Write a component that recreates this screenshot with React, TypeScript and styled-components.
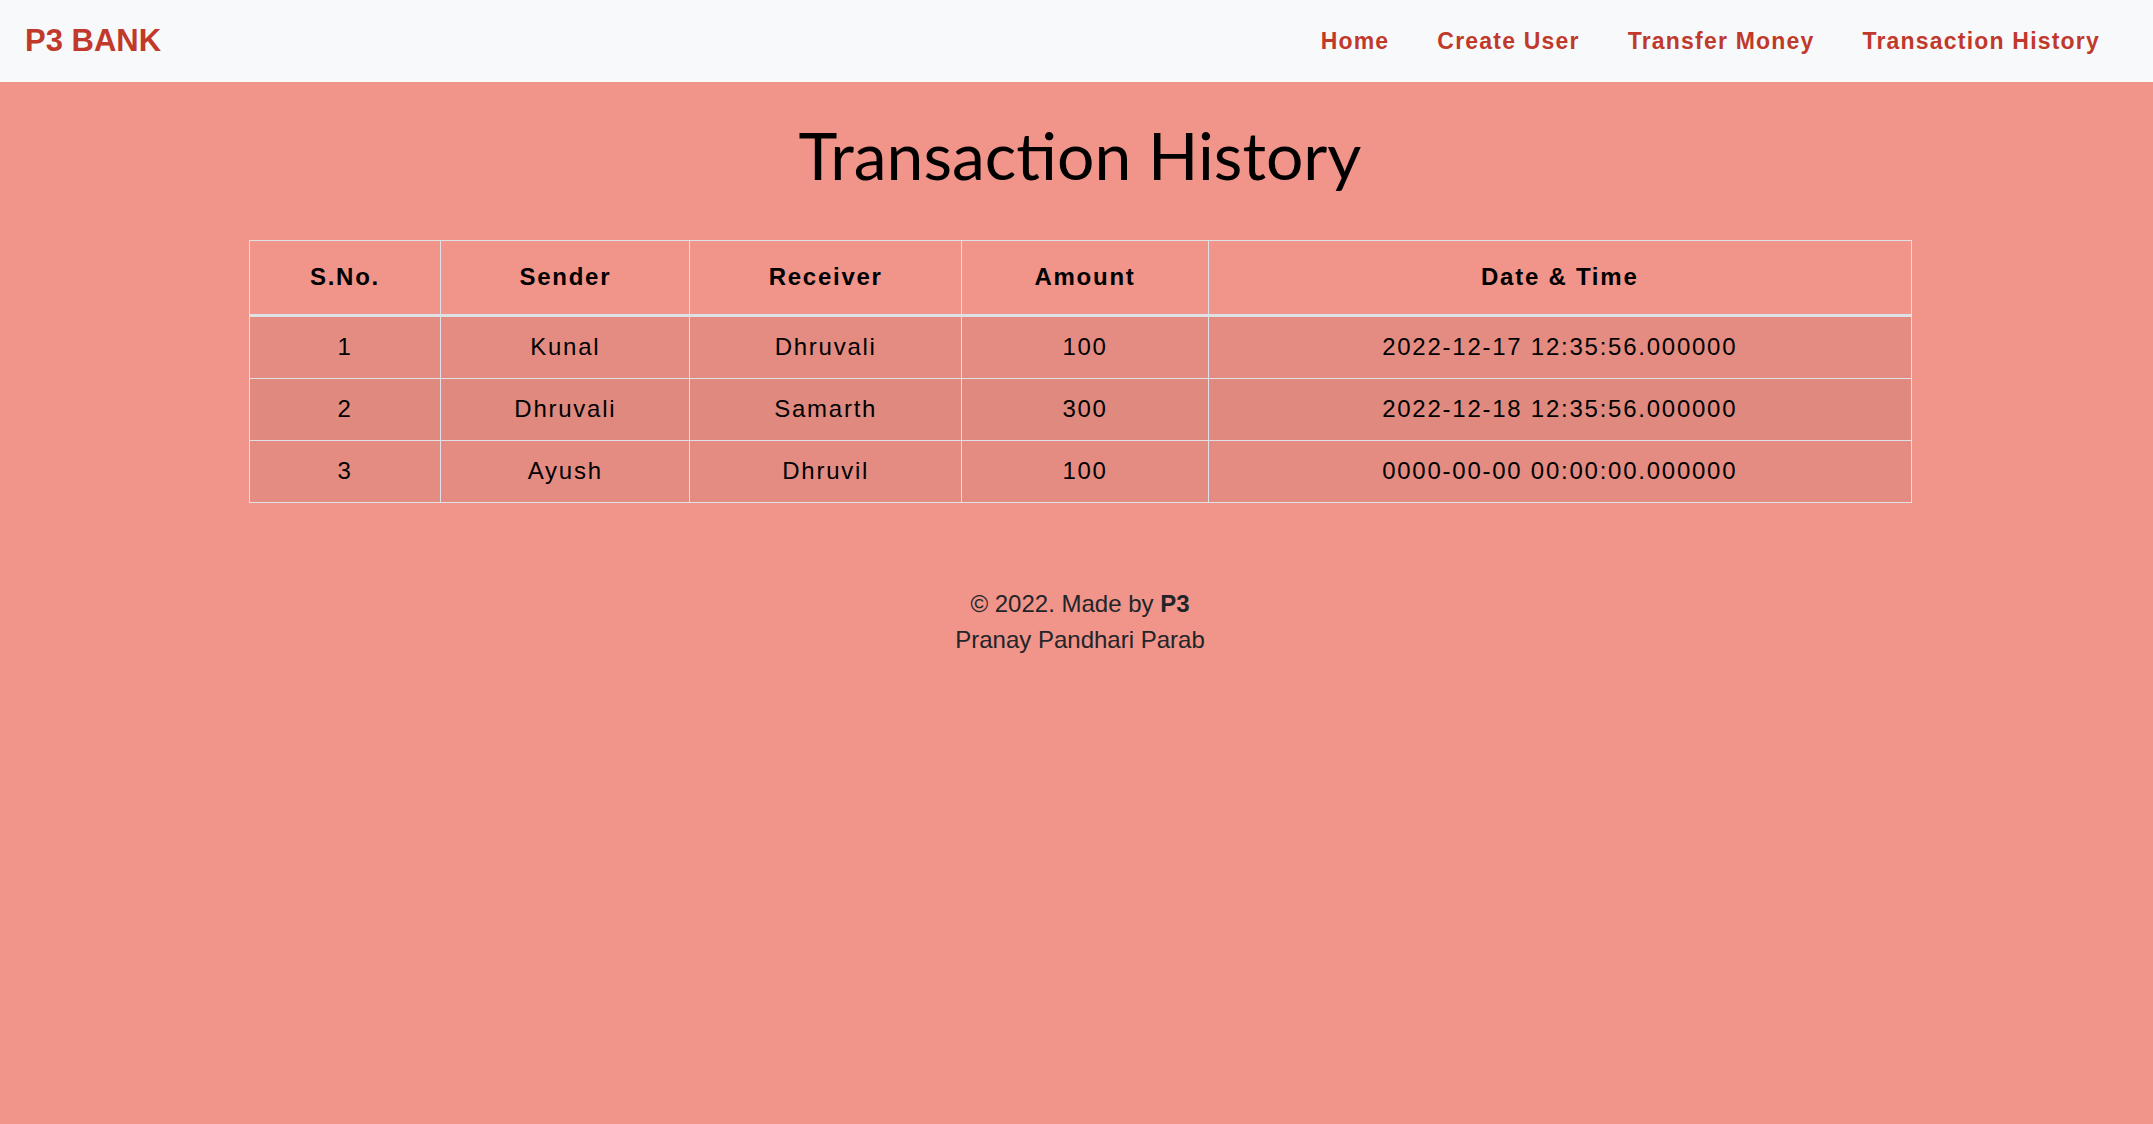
import styled, { createGlobalStyle } from "styled-components";

const GlobalStyle = createGlobalStyle`
    html, body {
        margin: 0;
        padding: 0;
        min-height: 100%;
        background: #f1948a;
    }
    body {
        font-family: "Liberation Sans", Arial, sans-serif;
        color: #212529;
    }
`

const Page = styled.div`
    min-height: 100vh;
    background: #f1948a;
`

const NavBar = styled.nav`
    height: 82px;
    background: #f8f9fa;
    display: flex;
    align-items: center;
    justify-content: space-between;
    padding: 0 29px 0 25px;
`

const Brand = styled.a`
    color: #c0392b;
    font-size: 31px;
    font-weight: bold;
    text-decoration: none;
`

const NavList = styled.ul`
    display: flex;
    list-style: none;
    margin: 0;
    padding: 0;
`

const NavLink = styled.a`
    display: block;
    padding: 0 24px;
    color: #c0392b;
    font-size: 23px;
    font-weight: bold;
    letter-spacing: 1.2px;
    text-decoration: none;
`

const Main = styled.main`
    padding-left: 7px;
`

const Title = styled.h1`
    margin: 33px 0 46px;
    font-family: Lato, "Open Sans", sans-serif;
    font-weight: 400;
    font-size: 66px;
    line-height: 1.2;
    color: #000;
    text-align: center;
`

const Table = styled.table`
    width: 1663px;
    margin: 0 auto;
    border-collapse: collapse;
    font-size: 24px;
    letter-spacing: 1.75px;
    color: #000;
    text-align: center;
    border: 1px solid #dee2e6;
`

const HeadCell = styled.th`
    padding: 18px 8px 18.5px;
    line-height: 36px;
    font-weight: bold;
    border: 1px solid #dee2e6;
    border-bottom: 3px solid #dee2e6;
`

const Row = styled.tr<{ shade: number }>`
    background: rgba(0, 0, 0, ${(props) => props.shade});
`

const Cell = styled.td`
    padding: 12.5px 8px;
    line-height: 36px;
    border: 1px solid #dee2e6;
`

const Footer = styled.footer`
    margin-top: 83px;
    text-align: center;
    font-size: 24px;
    line-height: 36px;
    color: #212529;
`

const columns = [
    { label: "S.No.", width: 192 },
    { label: "Sender", width: 249 },
    { label: "Receiver", width: 272 },
    { label: "Amount", width: 247 },
    { label: "Date & Time", width: 703 },
]

const transactions = [
    { id: 1, sender: "Kunal", receiver: "Dhruvali", amount: 100, date: "2022-12-17 12:35:56.000000" },
    { id: 2, sender: "Dhruvali", receiver: "Samarth", amount: 300, date: "2022-12-18 12:35:56.000000" },
    { id: 3, sender: "Ayush", receiver: "Dhruvil", amount: 100, date: "0000-00-00 00:00:00.000000" },
]

export default function App() {
    return (
        <Page>
            <GlobalStyle />
            <NavBar>
                <Brand href="#">P3 BANK</Brand>
                <NavList>
                    <li><NavLink href="#">Home</NavLink></li>
                    <li><NavLink href="#">Create User</NavLink></li>
                    <li><NavLink href="#">Transfer Money</NavLink></li>
                    <li><NavLink href="#">Transaction History</NavLink></li>
                </NavList>
            </NavBar>

            <Main>
                <Title>Transaction History</Title>

                <Table>
                    <colgroup>
                        {columns.map(c => <col key={c.label} style={{ width: c.width }} />)}
                    </colgroup>
                    <thead>
                        <tr>
                            {columns.map(c => <HeadCell key={c.label}>{c.label}</HeadCell>)}
                        </tr>
                    </thead>
                    <tbody>
                        {transactions.map((t, i) => (
                            <Row key={t.id} shade={i === 1 ? 0.075 : 0.05}>
                                <Cell>{t.id}</Cell>
                                <Cell>{t.sender}</Cell>
                                <Cell>{t.receiver}</Cell>
                                <Cell>{t.amount}</Cell>
                                <Cell>{t.date}</Cell>
                            </Row>
                        ))}
                    </tbody>
                </Table>

                <Footer>
                    <div>© 2022. Made by <b>P3</b></div>
                    <div>Pranay Pandhari Parab</div>
                </Footer>
            </Main>
        </Page>
    );
}
